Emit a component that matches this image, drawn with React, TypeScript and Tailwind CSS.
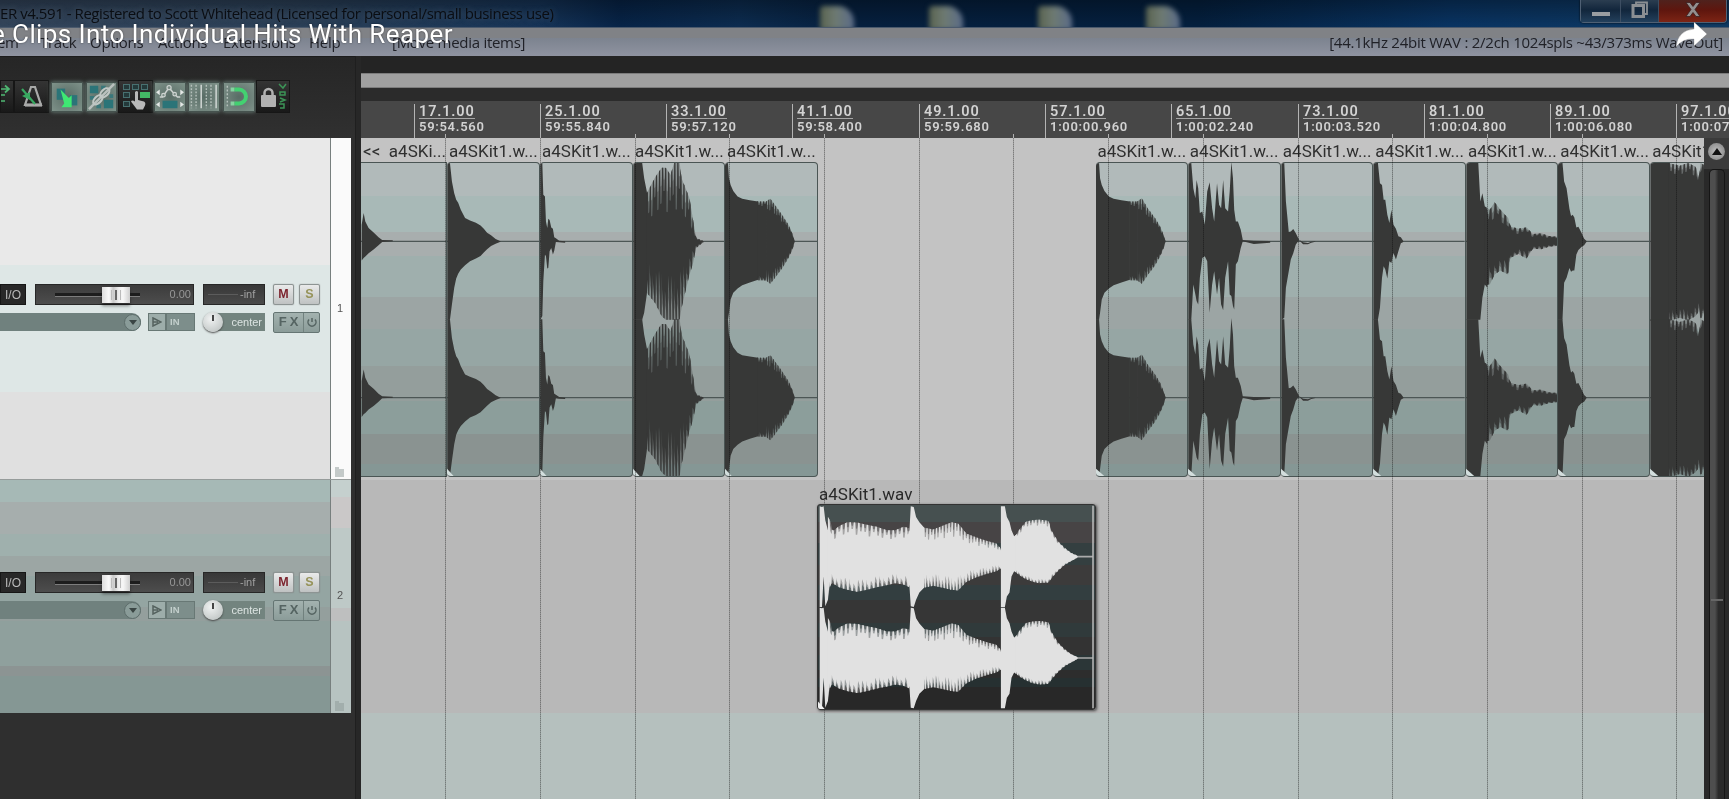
import React from "react";

type P3 = [number, number, number]; // x, height above centre, depth below centre

function envAt(env: P3[], x: number): [number, number] {
  for (let i = 1; i < env.length; i++) {
    const a = env[i - 1];
    const b = env[i];
    if (x <= b[0]) {
      const t = (x - a[0]) / (b[0] - a[0] || 1);
      return [a[1] + (b[1] - a[1]) * t, a[2] + (b[2] - a[2]) * t];
    }
  }
  const l = env[env.length - 1];
  return [l[1], l[2]];
}

function solid(env: P3[], cy: number): string {
  const top = env.map((p) => `${p[0]},${cy - p[1]}`);
  const bot = [...env].reverse().map((p) => `${p[0]},${cy + p[2]}`);
  return `M${top.join("L")}L${bot.join("L")}Z`;
}

// Spikes reaching the envelope, with valleys between them; the lower side is half a period behind.
function teeth(env: P3[], cy: number, step: number, depth: number): string {
  const top: string[] = [];
  const bot: string[] = [];
  const x0 = env[0][0];
  const x1 = env[env.length - 1][0];
  const put = (x: number, ku: number, kd: number) => {
    if (x > x1) return;
    const [u, d] = envAt(env, x);
    top.push(`${x.toFixed(1)},${(cy - u * ku).toFixed(1)}`);
    bot.unshift(`${x.toFixed(1)},${(cy + d * kd).toFixed(1)}`);
  };
  let i = 0;
  for (let x = x0; x <= x1; x += step, i++) {
    const v = 1 - depth * (0.75 + 0.25 * Math.sin(i * 2.3));
    const w = 1 - depth * (0.75 + 0.25 * Math.cos(i * 1.7));
    put(x, 1, w);
    put(x + step * 0.34, 1, w + (1 - w) * 0.4);
    put(x + step * 0.46, v, 1);
    put(x + step * 0.8, v, 1);
    put(x + step * 0.92, v + (1 - v) * 0.4, w);
  }
  put(x1, 1 - depth * 0.5, 1 - depth * 0.5);
  return `M${top.join("L")}L${bot.join("L")}Z`;
}

type Part = { env: P3[]; step?: number; depth?: number };
type ClipData = { label: string; x0: number; x1: number; w: number; parts: Part[]; cut?: boolean };

const tom: P3[] = [
  [0, 236, 236], [9, 236, 236], [12, 190, 215], [17, 170, 175], [25, 152, 155], [38, 135, 142], [52, 128, 132], [75, 124, 124], [100, 120, 116],
];
const shift = (env: P3[], dx: number, kx = 1): P3[] => env.map(([x, a, b]) => [dx + x * kx, a, b]);

const LEFT: ClipData[] = [
  {
    label: "<<  a4SKi...", x0: 33, x1: 290, w: 86,
    parts: [{ env: [[35, 50, 58], [41, 85, 50], [46, 60, 46], [56, 40, 36], [72, 26, 24], [86, 12, 12], [97, 4, 2], [129, 3, 0]] }],
  },
  {
    label: "a4SKit1.w...", x0: 290, x1: 570, w: 93,
    parts: [{ env: [[291, 236, 236], [299, 236, 236], [305, 180, 190], [312, 145, 140], [318, 125, 112], [324, 116, 98], [332, 95, 85], [345, 70, 72], [360, 63, 60], [378, 56, 52], [392, 48, 44], [402, 38, 34], [412, 26, 24], [424, 18, 14], [438, 7, 7], [453, 0, 1]] }],
  },
  {
    label: "a4SKit1.w...", x0: 570, x1: 848, w: 93,
    parts: [{ env: [[571, 236, 236], [577, 236, 225], [580, 140, 120], [585, 135, 40], [588, 60, 45], [592, 40, 82], [595, 68, 80], [599, 64, 30], [604, 42, 20], [609, 38, 40], [613, 12, 28], [618, 9, 2], [628, 2, 3], [646, 0, 4]] }],
  },
  {
    label: "a4SKit1.w...", x0: 848, x1: 1125, w: 92,
    parts: [
      { env: [[849, 236, 236], [876, 236, 236], [882, 190, 215], [890, 150, 160], [894, 120, 110]] },
      { env: [[890, 145, 155], [915, 192, 185], [935, 222, 225], [948, 222, 236], [962, 200, 236], [973, 236, 236], [990, 236, 236], [996, 190, 200], [1008, 160, 150], [1020, 130, 100], [1030, 70, 70], [1040, 10, 20], [1062, 1, 3]], step: 9.3, depth: 0.6 },
    ],
  },
  {
    label: "a4SKit1.w...", x0: 1125, x1: 1403, w: 93,
    parts: [
      { env: shift(tom, 1125, 1) },
      { env: [[1222, 120, 117], [1250, 120, 118]], step: 9, depth: 0.12 },
      { env: [[1249, 120, 118], [1262, 128, 128], [1280, 104, 105], [1300, 76, 78], [1318, 48, 48], [1330, 20, 22], [1335, 2, 2]], step: 7, depth: 0.28 },
    ],
  },
];

const RIGHT: ClipData[] = [
  {
    label: "a4SKit1.w...", x0: 38, x1: 259, w: 92.3,
    parts: [
      { env: shift(tom, 38, 0.82) },
      { env: [[119, 120, 117], [139, 120, 118]], step: 7, depth: 0.12 },
      { env: [[138, 120, 118], [149, 130, 128], [163, 100, 102], [180, 72, 74], [193, 46, 46], [202, 18, 20], [206, 2, 2]], step: 6, depth: 0.28 },
    ],
  },
  {
    label: "a4SKit1.w...", x0: 259, x1: 484, w: 93,
    parts: [
      { env: [[260, 236, 236], [267, 236, 236], [272, 160, 130], [277, 130, 160], [280, 185, 180], [284, 160, 190], [288, 85, 110], [294, 90, 50], [300, 50, 45], [306, 150, 60], [312, 178, 215], [318, 100, 130], [323, 60, 90], [330, 175, 160], [335, 110, 110], [340, 100, 190], [345, 185, 208], [350, 100, 110], [357, 90, 60], [361, 150, 160], [365, 240, 165], [369, 190, 195], [372, 95, 205], [376, 60, 70], [381, 60, 60], [388, 35, 20], [393, 4, 0], [420, 2, 8], [460, 1, 4]] },
    ],
  },
  {
    label: "a4SKit1.w...", x0: 484, x1: 708, w: 92.5,
    parts: [{ env: [[485, 236, 236], [492, 236, 230], [496, 120, 140], [503, 28, 90], [508, 30, 55], [514, 37, 36], [520, 25, 10], [528, 5, -4], [538, -3, 9], [550, -5, 9], [558, -1, 4], [568, 0, 1]] }],
  },
  {
    label: "a4SKit1.w...", x0: 708, x1: 932, w: 92.7,
    parts: [{ env: [[709, 236, 236], [720, 236, 236], [725, 175, 200], [730, 170, 110], [734, 125, 75], [738, 125, 85], [743, 80, 112], [748, 55, 60], [753, 95, 65], [758, 50, 35], [764, 38, 55], [770, 15, 30], [776, 12, 6], [782, 1, 2]] }],
  },
  {
    label: "a4SKit1.w...", x0: 932, x1: 1155, w: 92.3,
    parts: [
      { env: [[933, 236, 236], [962, 236, 236], [967, 120, 236], [972, 145, 170], [978, 105, 130], [984, 95, 140], [986, 75, 80]] },
      { env: [[978, 105, 130], [990, 95, 130], [1002, 118, 100], [1016, 95, 88], [1035, 70, 100], [1040, 45, 50], [1060, 38, 38], [1080, 42, 52], [1095, 22, 22], [1115, 24, 24], [1135, 16, 16], [1155, 14, 14]], step: 12, depth: 0.42 },
    ],
  },
  {
    label: "a4SKit1.w...", x0: 1155, x1: 1378, w: 92,
    parts: [{ env: [[1152, 236, 236], [1166, 236, 236], [1170, 180, 125], [1176, 160, 110], [1183, 98, 80], [1187, 76, 92], [1191, 80, 88], [1195, 72, 88], [1200, 42, 40], [1205, 44, 26], [1213, 24, 16], [1219, 8, 12], [1225, 1, 1]] }],
  },
  {
    label: "a4SKit1.wav", x0: 1378, x1: 1508, w: 54,
    cut: true,
    parts: [
      { env: [[1379, 236, 240], [1425, 236, 240]] },
      { env: [[1423, 236, 240], [1450, 228, 230], [1470, 236, 238], [1488, 225, 225], [1496, 190, 210], [1500, 236, 236], [1508, 230, 215]], step: 9, depth: 0.13 },
    ],
  },
];

const SELECTED: Part[] = [
  { env: [[57, 152, 152], [64, 150, 152], [69, 152, 60], [74, 110, 150], [82, 80, 130], [87, 110, 80]] },
  { env: [[82, 120, 120], [90, 106, 82], [96, 76, 80], [115, 92, 92], [140, 104, 100], [170, 103, 106], [200, 96, 100], [230, 90, 92], [260, 80, 86], [285, 80, 80], [310, 90, 84], [328, 86, 92]], step: 13, depth: 0.36 },
  { env: [[320, 55, 60], [328, 80, 90], [332, 152, 150], [341, 150, 152], [348, 120, 130], [358, 104, 108], [372, 88, 94]] },
  { env: [[370, 88, 94], [400, 82, 88], [430, 94, 94], [455, 104, 100], [475, 100, 102], [500, 70, 76], [530, 58, 62], [560, 48, 52], [590, 40, 44], [606, 22, 34]], step: 9.5, depth: 0.42 },
  { env: [[604, 152, 152], [616, 152, 152], [622, 120, 120], [630, 105, 108], [636, 80, 60], [644, 62, 44], [650, 66, 48]] },
  { env: [[648, 64, 46], [660, 82, 56], [680, 106, 68], [700, 110, 76], [720, 112, 80], [748, 108, 78], [756, 80, 66], [775, 48, 44], [795, 28, 26], [815, 12, 14], [835, 3, 3], [836, 0, 0]], step: 10, depth: 0.16 },
];

const STROKES = (parts: Part[], cy: number, fill: string) =>
  parts.map((p, i) =>
    p.step ? (
      <g key={i}>
        <path d={solid(p.env, cy)} fill={fill} opacity={0.3} />
        <path d={teeth(p.env, cy, p.step, (p.depth ?? 0.3) * 0.5)} fill={fill} opacity={0.45} />
        <path d={teeth(p.env, cy, p.step, p.depth ?? 0.3)} fill={fill} />
      </g>
    ) : (
      <path key={i} d={solid(p.env, cy)} fill={fill} />
    )
  );

function Clip({ c, first }: { c: ClipData; first?: boolean }) {
  return (
    <div className="flex h-full shrink-0 flex-col" style={{ width: c.w }}>
      <div className="h-[24px] overflow-hidden pl-[2px] font-[Roboto,sans-serif] text-[17px] leading-[27px] tracking-[0.020px] whitespace-pre text-[#303030]">
        {c.label}
      </div>
      <div
        className={
          "h-[315px] overflow-hidden border-t border-b border-[#4a5554] bg-[linear-gradient(#b1baba_0_33px,#a8b9b7_33px_69px,#a8aeae_69px_93px,#9fafad_93px_134px,#9ca5a4_134px_166px,#96a6a4_166px_203px,#949e9c_203px_238px,#8c9e9b_238px_271px,#8a9391_271px_301px,#859795_301px)] " +
          (first ? "" : "rounded-[4px] ") + (c.cut ? "rounded-r-none" : "border-r border-r-[#4a5554]")
        }
      >
        <svg className="block h-full w-full" viewBox={`${c.x0} 97 ${c.x1 - c.x0} 943`} preserveAspectRatio="none">
          <path d={`M${c.x0} 333H${c.x1}M${c.x0} 804H${c.x1}`} stroke="#4c5655" strokeWidth="4" />
          {STROKES(c.parts, 333, "#373837")}
          {STROKES(c.parts, 804, "#373837")}
          {!first && <path d={`M${c.x0} 1040V1018L${c.x0 + 20} 1040Z`} fill="#d3dedd" />}
        </svg>
      </div>
    </div>
  );
}

const MARKS: [number, string, string][] = [
  [414, "17.1.00", "59:54.560"], [540, "25.1.00", "59:55.840"], [666, "33.1.00", "59:57.120"], [792, "41.1.00", "59:58.400"],
  [919, "49.1.00", "59:59.680"], [1045, "57.1.00", "1:00:00.960"], [1171, "65.1.00", "1:00:02.240"], [1298, "73.1.00", "1:00:03.520"],
  [1424, "81.1.00", "1:00:04.800"], [1550, "89.1.00", "1:00:06.080"], [1676, "97.1.00", "1:00:07.360"],
];
const GRID = [445, 540, 635, 729, 824, 919, 1013, 1108, 1203, 1298, 1392, 1487, 1582, 1676];

function Toolbar() {
  const on = "border border-[#46534f] bg-[radial-gradient(#586c65,#7f928a)] shadow-[0_0_4px_#6f857d]";
  const off = "border border-[#161616] bg-[linear-gradient(#343434,#191919)]";
  return (
    <div className="mt-[23px] flex h-[33px] items-center">
      <div className={`h-[33px] w-[14px] ${off}`}>
        <svg viewBox="0 0 14 33" width="14" height="33" fill="none" stroke="#4fb873" strokeWidth="1.700">
          <path d="M0 8H7M4 4.500l4 3.500-4 3.500M0 14H4M0 20h4" />
        </svg>
      </div>
      <div className={`mr-[2px] h-[33px] w-[35px] ${off}`}>
        <svg viewBox="0 0 35 33" width="35" height="33" fill="none">
          <path d="M16 6h4l6 18H10z" stroke="#a9aaa9" strokeWidth="2.200" />
          <path d="M10 24h17" stroke="#a9aaa9" strokeWidth="3.200" />
          <path d="M7 8l13 15" stroke="#38a860" strokeWidth="2.200" />
          <path d="M7 15l8-4v8z" fill="#38a860" />
        </svg>
      </div>
      <div className={`mr-[3px] h-[30px] w-[32px] ${on}`}>
        <svg viewBox="0 0 32 30" width="30" height="28">
          <rect x="5" y="6" width="9" height="12" fill="#2b7478" />
          <rect x="19" y="13" width="8" height="11" fill="#2b7478" />
          <path d="M9 7l9 9 3-3v13H10l3-4z" fill="#3fe873" />
        </svg>
      </div>
      <div className={`mr-px h-[30px] w-[31px] ${on}`}>
        <svg viewBox="0 0 32 30" width="30" height="28" fill="none">
          <path d="M3 3h9v8H3zM18 18h10v9H18z" fill="#2b7478" />
          <path d="M15 3h5v4h-5zM24 12h4v4h-4zM3 14h5v4H3zM10 23h5v4h-5z" fill="#39777a" />
          <path d="M2 28L29 1" stroke="#b9c0bd" strokeWidth="2.600" />
          <ellipse cx="11.500" cy="18" rx="6" ry="3.500" transform="rotate(-45 11.500 18)" stroke="#c0c7c4" strokeWidth="2.300" />
          <ellipse cx="19" cy="10.500" rx="6" ry="3.500" transform="rotate(-45 19 10.500)" stroke="#c0c7c4" strokeWidth="2.300" />
        </svg>
      </div>
      <div className={`mr-px h-[33px] w-[35px] ${off}`}>
        <svg viewBox="0 0 35 33" width="35" height="33">
          <g fill="#24393a" stroke="#487070" strokeWidth="1">
            <rect x="4.500" y="3.500" width="6" height="5" /><rect x="13.500" y="3.500" width="6" height="5" /><rect x="22.500" y="3.500" width="6" height="5" />
            <rect x="4.500" y="11.500" width="6" height="5" /><rect x="4.500" y="20.500" width="6" height="5" />
          </g>
          <rect x="21" y="11" width="10" height="6" fill="#43b865" />
          <path d="M16 11q2-2 3 0v8l6 1.500q2 1 1 4l-2 4h-6l-6-8q1-2 4 0z" fill="#b9b9b9" />
        </svg>
      </div>
      <div className={`mr-[2px] h-[30px] w-[32px] ${on}`}>
        <svg viewBox="0 0 32 30" width="30" height="28" fill="none">
          <path d="M5 15h3l2-3 5-7 5 6 4 4h3" stroke="#cdd3d0" strokeWidth="1.600" />
          <g fill="#7b8d86" stroke="#cdd3d0" strokeWidth="1.300"><circle cx="9" cy="13" r="1.900" /><circle cx="15" cy="5" r="2.200" /><circle cx="21" cy="12" r="1.900" /></g>
          <rect x="8" y="19" width="16" height="8" fill="#2b7478" />
          <path d="M1 10l4-3v6zM31 10l-4-3v6zM1 23l4-3v6zM31 23l-4-3v6z" fill="#e4e8e6" />
        </svg>
      </div>
      <div className={`mr-[3px] h-[30px] w-[32px] ${on}`}>
        <svg viewBox="0 0 32 30" width="30" height="28" fill="none">
          <path d="M2.500 2v25M7.500 2v25M18.500 2v25M23.500 2v25" stroke="#b5c0bb" strokeWidth="1.500" strokeDasharray="2 1.500" />
          <path d="M13 2v25M29 2v25" stroke="#cbd2cf" strokeWidth="1.700" />
        </svg>
      </div>
      <div className={`mr-px h-[30px] w-[32px] ${on}`}>
        <svg viewBox="0 0 32 30" width="30" height="28" fill="none">
          <path d="M3.500 3v24" stroke="#b5c0bb" strokeWidth="1.500" strokeDasharray="2 2" />
          <path d="M11 7h5a7.500 7.500 0 010 15h-5" stroke="#43d171" strokeWidth="4.200" />
          <path d="M7 7h4M7 22h4" stroke="#86d3a0" strokeWidth="4.200" />
        </svg>
      </div>
      <div className={`h-[33px] w-[34px] ${off}`}>
        <svg viewBox="0 0 34 33" width="34" height="33" fill="none">
          <rect x="4" y="14" width="15" height="12" rx="1" fill="#b1b1b1" />
          <path d="M7.500 14v-2a4 4 0 018 0v2" stroke="#b1b1b1" strokeWidth="2.500" />
          <path d="M22 3l4 4 3-4M23 11h5v3h-5zM23 17l5 2-5 2M22 23h5v4h-4" stroke="#3c9457" strokeWidth="1.500" />
        </svg>
      </div>
    </div>
  );
}

function Controls() {
  const btn = "flex h-[21px] w-[21px] items-center justify-center rounded-[2px] border border-[#8d9493] bg-[linear-gradient(#e9eaea,#bfc2c2)] text-[12.500px] font-bold shadow-[0_0_1px_#777]";
  return (
    <div className="flex h-[50px] flex-col gap-[6px] font-[Liberation_Sans,Arial,sans-serif]">
      <div className="flex h-[21px] items-center">
        <div className="mr-[9px] flex h-[21px] w-[26px] items-center justify-center border border-[#161616] bg-[#282828] text-[12px] text-[#b8b8b8]">I/O</div>
        <div className="mr-[9px] flex h-[21px] w-[159px] items-center border border-[#272727] bg-[linear-gradient(#3c3c3c,#4d4d4d)] pl-[19px]">
          <div className="h-[4px] w-[47px] border-b border-[#7d7d7d] bg-[#1d1d1d]" />
          <div className="flex h-[16px] w-[28px] items-center justify-center gap-[3px] bg-[linear-gradient(90deg,#ddd,#fafafa_25%,#c9c9c9_40%,#eee_60%,#f7f7f7_75%,#cfcfcf)] shadow-[0_3px_3px_#0006]">
            <div className="h-[10px] w-[1px] bg-[#bbb]" />
            <div className="h-[10px] w-[2px] bg-[#666]" />
            <div className="h-[10px] w-[1px] bg-[#bbb]" />
          </div>
          <div className="h-[4px] w-[10px] border-b border-[#7d7d7d] bg-[#1d1d1d]" />
          <div className="flex-1 pr-[2px] text-right text-[11px] text-[#979797]">0.00</div>
        </div>
        <div className="mr-[8px] flex h-[21px] w-[62px] items-center gap-[2px] border border-[#272727] bg-[linear-gradient(#383838,#4a4a4a)] pl-[4px] text-[11px] text-[#a0a0a0]">
          <div className="h-px w-[30px] bg-[#5c5c5c]" />-inf
        </div>
        <div className={`mr-[5px] ${btn} text-[#7d2630]`}>M</div>
        <div className={`${btn} text-[#96935a]`}>S</div>
      </div>
      <div className="flex h-[22px] items-center">
        <div className="mr-[7px] flex h-[18px] w-[141px] items-center justify-end rounded-r-full bg-[#70817e]">
          <div className="flex size-[17px] items-center justify-center rounded-full border border-[#5d6d6b] bg-[#8a9c99]">
            <div className="size-0 border-x-[4px] border-t-[5px] border-x-transparent border-t-[#3a4544]" />
          </div>
        </div>
        <div className="flex h-[18px] w-[18px] items-center justify-center border border-[#687875] bg-[#9dadaa]">
          <svg width="10" height="10" viewBox="0 0 10 10"><path d="M1 1l8 4-8 4zM1 5h5" fill="none" stroke="#55625f" strokeWidth="1.500" /></svg>
        </div>
        <div className="mr-[8px] flex h-[18px] w-[29px] items-center border border-[#687875] bg-[#7d8e8b] pl-[3px] text-[9.500px] leading-none font-bold text-[#c3cfcc]">IN</div>
        <div className="z-10 -mr-[10px] flex size-[20px] justify-center rounded-full bg-[radial-gradient(circle_at_40%_35%,#f0f2f2,#b6bcbb)] pt-[3px] shadow-[0_1px_2px_#444]">
          <div className="h-[6px] w-[1.500px] bg-[#444]" />
        </div>
        <div className="mr-[8px] flex h-[18px] w-[52px] items-center justify-end bg-[#73847f] pr-[3px] text-[11px] text-[#dce4e2]">center</div>
        <div className="flex h-[21px] w-[47px] items-center rounded-[2px] border border-[#657573] bg-[linear-gradient(#a3b2af,#8b9c99)]">
          <div className="flex h-full w-[30px] items-center justify-center gap-[3px] border-r border-[#71817e] text-[13px] font-bold text-[#556462]"><span>F</span><span>X</span></div>
          <svg className="mx-auto" width="12" height="12" viewBox="0 0 12 12"><path d="M3 3.500a4 4 0 106 0M6 2v4" fill="none" stroke="#556462" strokeWidth="1.500" /></svg>
        </div>
      </div>
    </div>
  );
}

function FolderMark() {
  return (
    <svg width="11" height="10" viewBox="0 0 11 10"><path d="M1 0h4v2h5v8H1z" fill="#8d9997" opacity="0.5" /></svg>
  );
}

function TrackPanel({ n, first }: { n: string; first?: boolean }) {
  return (
    <div className={first ? "flex h-[342px] border-b border-[#969c9b]" : "flex h-[233px]"}>
      <div
        className={
          "w-[331px] shrink-0 border-r border-[#777f7e] " +
          (first
            ? "bg-[linear-gradient(#e9e9e9_0_127px,#dee7e6_127px_254px,#e0e0e0_254px)] pt-[146px]"
            : "bg-[linear-gradient(#a6b9b6_0_22px,#a6aead_22px_54px,#9fb0ad_54px_76px,#9ca6a4_76px_96px,#94a5a2_96px_127px,#949f9d_127px_141px,#8fa09d_141px_186px,#8c9493_186px_196px,#859794_196px)] pt-[92px]")
        }
      >
        <Controls />
      </div>
      <div
        className={
          "flex w-[20px] flex-col items-center font-[Liberation_Sans,Arial,sans-serif] text-[11px] text-[#555] " +
          (first ? "bg-[#fafafa] pt-[162px]" : "bg-[linear-gradient(#c5d0ce_0_17px,#cac8c8_17px_48px,#bec9c7_48px_128px,#bebfbf_128px_141px,#b7c3c1_141px)] pt-[107px]")
        }
      >
        <span className="-ml-[2px]">{n}</span>
        <div className="mt-auto -ml-[3px] mb-[2px]"><FolderMark /></div>
      </div>
    </div>
  );
}

export default function App() {
  return (
    <div className="relative flex h-[799px] w-[1729px] flex-col overflow-hidden bg-[#2d2d2d]">
      {/* Window caption */}
      <div className="relative flex h-[28px] shrink-0 items-center overflow-hidden border-b border-[#4b5a6d] bg-[linear-gradient(90deg,#33455c_0,#2b4058_300px,#163458_540px,#072448_620px,#0c2c50_740px,#06203f_850px,#04203f_1200px,#093463_1450px,#0f3a63_1729px)]">
        <div className="h-full w-full bg-[linear-gradient(#0005,#0000)] font-[Open_Sans,Noto_Sans,sans-serif] text-[15px] leading-[27px] tracking-[-0.440px] whitespace-nowrap text-[#0a0d12] [text-shadow:0_0_6px_#8fa0b566]">
          ER v4.591 - Registered to Scott Whitehead (Licensed for personal/small business use)
        </div>
        {[820, 929, 1038, 1146].map((x) => (
          <div key={x} className="absolute top-[6px] h-[24px] w-[34px] rounded-tl-[4px] rounded-tr-[16px] bg-[linear-gradient(90deg,#59634f,#6e7a72_45%,#5a6b88)] blur-[2.500px]" style={{ left: x }} />
        ))}
        <div className="absolute top-0 right-[2px] flex h-[23px] rounded-b-[4px] border border-t-0 border-[#4f6074] shadow-[0_0_2px_#000]">
          <div className="flex w-[40px] items-end justify-center border-r border-[#3d4e62] bg-[linear-gradient(#2b3d50,#12263c_45%,#23405c)] pb-[6px]">
            <div className="h-[4px] w-[18px] bg-[#999da1]" />
          </div>
          <div className="flex w-[38px] items-center justify-center border-r border-[#3d4e62] bg-[linear-gradient(#2b3d50,#12263c_45%,#23405c)] pb-[3px]">
            <svg width="19" height="18" viewBox="0 0 19 18" fill="none" stroke="#8b8f93"><path d="M6 3V1.500h11V13h-2" strokeWidth="1.800" /><rect x="3" y="4.500" width="10.500" height="11" strokeWidth="3" /></svg>
          </div>
          <div className="flex w-[67px] items-center justify-center rounded-br-[3px] bg-[linear-gradient(#4f221d,#5e160e_45%,#7c2415)] pb-[3px]">
            <svg width="16" height="15" viewBox="0 0 16 14"><path d="M1 0h4l3 4 3-4h4l-5 7 5 7h-4l-3-4-3 4H1l5-7z" fill="#938f8f" stroke="#3a2020" strokeWidth="0.800" /></svg>
          </div>
        </div>
      </div>
      {/* Menu bar */}
      <div className="flex h-[28px] shrink-0 items-center bg-[linear-gradient(#808286_0_34%,#7c838f_36%,#8f93a0)] font-[Open_Sans,Noto_Sans,sans-serif] text-[15px] tracking-[-0.280px] whitespace-nowrap text-[#202127]">
        <span className="-ml-[12px] w-[52px]">Item</span>
        <span className="w-[50px]">Track</span>
        <span className="w-[68px]">Options</span>
        <span className="w-[65px]">Actions</span>
        <span className="w-[86px]">Extensions</span>
        <span className="w-[83px]">Help</span>
        <span>[Move media items]</span>
        <span className="ml-auto pr-[6px] tracking-[-0.250px]">[44.1kHz 24bit WAV : 2/2ch 1024spls ~43/373ms WaveOut]</span>
      </div>

      <div className="flex min-h-0 flex-1">
        {/* Track control panel */}
        <div className="flex w-[355px] shrink-0 flex-col bg-[#2f2f2f]">
          <div className="h-[82px] shrink-0 border-t border-[#1c1c1c] bg-[linear-gradient(#262626,#303030)]"><Toolbar /></div>
          <div className="pr-[4px]">
            <TrackPanel n="1" first />
            <TrackPanel n="2" />
          </div>
        </div>
        <div className="w-[6px] shrink-0 border-l border-[#1f1f1f] bg-[#272727]" />

        {/* Arrange view */}
        <div className="flex min-w-0 flex-1 flex-col">
          <div className="h-[17px] shrink-0 bg-[#242424]" />
          <div className="h-[15px] shrink-0 border-y border-[#7c7c7c] bg-[#a0a0a0]" />
          <div className="h-[13px] shrink-0 bg-[#2b2b2b]" />
          <div className="relative h-[37px] shrink-0 overflow-hidden bg-[#474747] font-[Roboto,sans-serif] font-semibold text-[#d2d2d2]">
            {MARKS.map(([x, a, b]) => (
              <div key={a} className="absolute top-[3px] flex h-[34px] flex-col items-start border-l border-[#b4b4b4] pl-[4px] whitespace-nowrap" style={{ left: x - 361 }}>
                <div className="h-[15px] border-b border-[#a5a5a5] text-[14.500px] leading-[15px] tracking-[0.850px]">{a}</div>
                <div className="text-[13px] leading-[16px] tracking-[0.700px]">{b}</div>
              </div>
            ))}
            {GRID.map((x) => (
              <div key={x} className="absolute bottom-0 h-[4px] w-px bg-[#b0b0b0]" style={{ left: x - 361 }} />
            ))}
          </div>
          <div className="flex min-h-0 flex-1">
            <div className="relative flex w-[1343px] shrink-0 flex-col overflow-hidden">
              <div className="flex h-[342px] shrink-0 bg-[#c3c3c3]">
                {LEFT.map((c, i) => <Clip key={i} c={c} first={i === 0} />)}
                <div className="w-[277.500px] shrink-0" />
                {RIGHT.map((c, i) => <Clip key={i} c={c} />)}
              </div>
              <div className="h-[233px] shrink-0 bg-[#b8b8b8] pl-[456px]">
                <div className="relative z-20 w-[279px]">
                  <div className="h-[24px] pl-[2px] font-[Roboto,sans-serif] text-[17px] leading-[28px] text-[#2a2a2a]">a4SKit1.wav</div>
                  <div className="h-[206px] overflow-hidden rounded-[3px] border border-[#333] bg-[linear-gradient(#465050_0_17px,#474445_17px_38px,#343f40_38px_60px,#3c3b3b_60px_80px,#333e40_80px_95px,#363636_95px_118px,#303a3b_118px_132px,#333_132px_150px,#2b3637_150px_165px,#2d2d2d_165px_173px,#263031_173px_182px,#282828_182px)] shadow-[1px_1px_3px_#444]">
                    <svg className="block h-full w-full" viewBox="52 102 836 616" preserveAspectRatio="none">
                      <path d="M830 258H881M830 564H881" stroke="#aaa" strokeWidth="5" />
                      <path d="M882 104V716" stroke="#d0d0d0" strokeWidth="4" />
                      {STROKES(SELECTED, 258, "#e1e1e1")}
                      {STROKES(SELECTED, 564, "#e1e1e1")}
                      <path d="M52 718V695L72 718Z" fill="#f0f0f0" />
                    </svg>
                  </div>
                </div>
              </div>
              <div className="flex-1 bg-[#b5c0be]" />
              {GRID.map((x) => (
                <div key={x} className="absolute inset-y-0 z-10 w-px bg-[repeating-linear-gradient(#a4a4a4_0_1px,#cecece_1px_2px)] mix-blend-multiply" style={{ left: x - 361 }} />
              ))}
            </div>
            {/* Vertical scroll bar */}
            <div className="flex flex-1 flex-col items-center bg-[#292929]">
              <div className="flex h-[31px] w-full items-center justify-center bg-[#3b3b3b] pb-[4px]">
                <div className="flex size-[17px] items-center justify-center rounded-full bg-[radial-gradient(#c2c2c2,#7d7d7d)]">
                  <div className="size-0 border-x-[5px] border-b-[7px] border-x-transparent border-b-[#111]" />
                </div>
              </div>
              <div className="w-[16px] flex-1 rounded-t-[5px] border-x border-t border-[#151515] bg-[linear-gradient(90deg,#4e4e4e_0_35%,#2a2a2a_60%)] pt-[429px]">
                <div className="ml-[1px] h-[2px] w-[12px] bg-[#666]" />
              </div>
            </div>
          </div>
        </div>
      </div>

      {/* Player overlay */}
      <div className="absolute top-[18px] left-0 z-30 font-[Roboto,sans-serif] text-[26px] leading-[33px] tracking-[0.410px] whitespace-nowrap text-white [text-shadow:0_0_2px_#0008]">
        <span className="-ml-[9px]">e Clips Into Individual Hits With Reaper</span>
      </div>
      <svg className="absolute top-[21px] left-[1675px] z-30" width="33" height="27" viewBox="0 0 33 27">
        <path d="M19 1L32 13 19 25V18Q8 17 1 26 3 9 19 8Z" fill="#fff" stroke="#6666" strokeWidth="0.600" />
      </svg>
    </div>
  );
}
